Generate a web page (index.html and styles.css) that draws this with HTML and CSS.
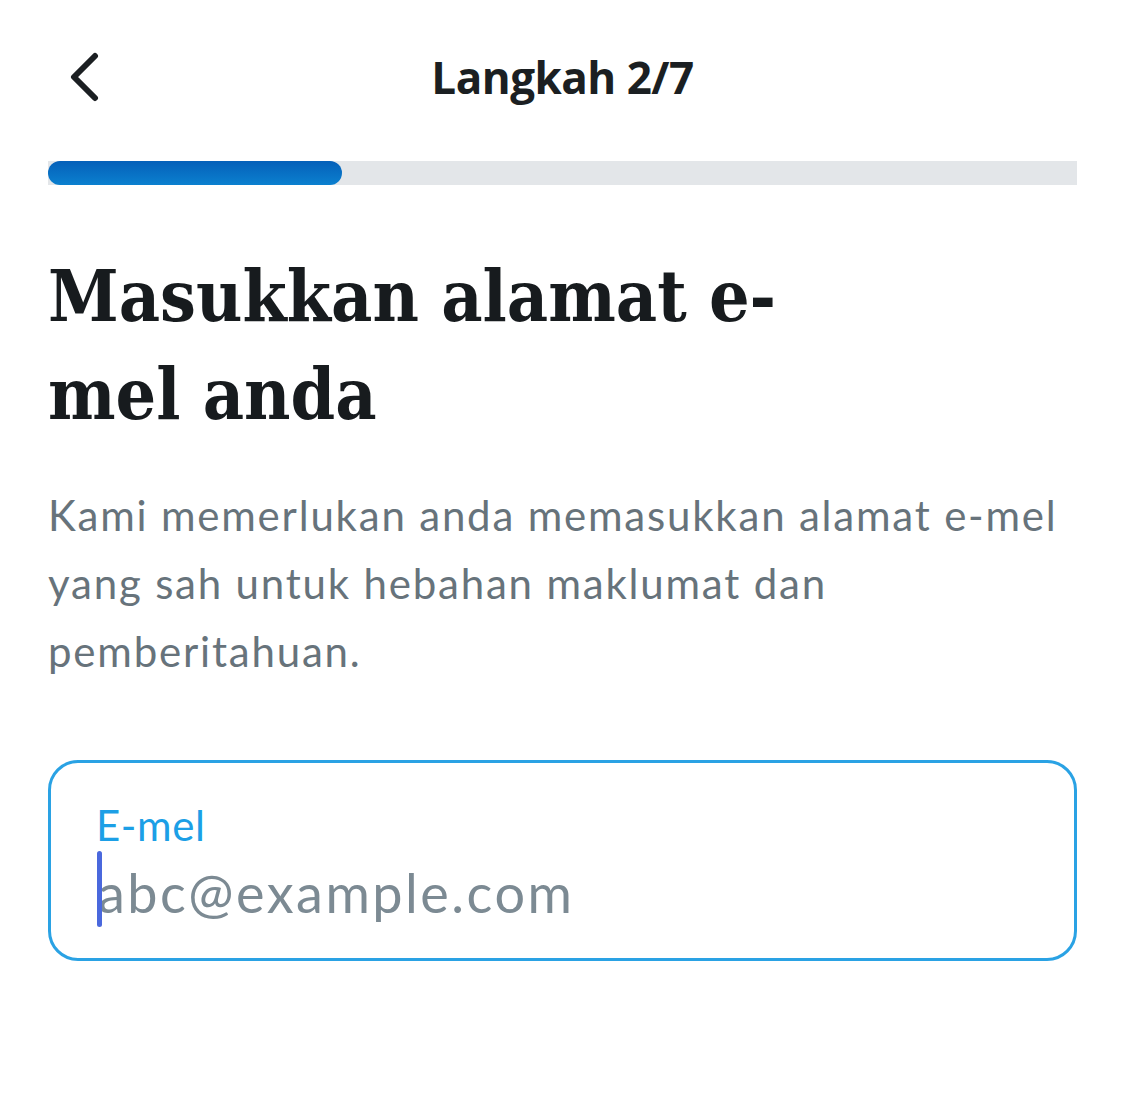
FILE: index.html
```html
<!DOCTYPE html>
<html lang="ms">
<head>
    <meta charset="UTF-8">
    <meta name="viewport" content="width=device-width, initial-scale=1.0">
    <title>Langkah 2/7</title>
    <link rel="stylesheet" href="styles.css">
</head>
<body>
    <div class="page">
        <div class="topbar">
            <a href="#" class="back" aria-label="Kembali">
                <svg width="36" height="52" viewBox="0 0 36 52">
                    <path d="M29 4 L8 25 L29 46" fill="none" stroke="#1b1f22" stroke-width="6" stroke-linecap="round" stroke-linejoin="round"/>
                </svg>
            </a>
            <h1 class="step-title">Langkah 2/7</h1>
        </div>

        <div class="progress">
            <div class="progress-fill" style="width: 28.6%"></div>
        </div>

        <h2 class="heading">Masukkan alamat e-<br>mel anda</h2>

        <p class="desc">Kami memerlukan anda memasukkan alamat e-mel yang sah untuk hebahan maklumat dan pemberitahuan.</p>

        <div class="field">
            <label for="email" class="field-label">E-mel</label>
            <div class="field-row">
                <span class="caret"></span>
                <input type="email" id="email" class="field-input" placeholder="abc@example.com">
            </div>
        </div>
    </div>
</body>
</html>
```

FILE: styles.css
```css
body {
    margin: 0;
    padding: 0;
    background-color: #ffffff;
    font-family: Lato, "Noto Sans", sans-serif;
}

.page {
    padding: 0 48px;
}

.topbar {
    position: relative;
    height: 160px;
    display: flex;
    align-items: center;
    justify-content: center;
}

.topbar .back {
    position: absolute;
    left: 18px;
    top: 52px;
    display: block;
}

.step-title {
    margin: 0;
    font-family: "Open Sans", sans-serif;
    font-size: 44px;
    font-weight: 700;
    letter-spacing: -0.5px;
    color: #1b1f22;
    position: relative;
    top: -3px;
}

.progress {
    height: 24px;
    background-color: #e3e6e9;
    margin-top: 1px;
}

.progress-fill {
    height: 100%;
    border-radius: 12px;
    background: linear-gradient(180deg, #0560b9 0%, #0b80cf 100%);
}

.heading {
    margin: 62px 0 0 0;
    font-family: "DejaVu Serif", serif;
    font-stretch: condensed;
    font-size: 71px;
    font-weight: 700;
    line-height: 98px;
    color: #171b1e;
}

.desc {
    margin: 38px 0 0 0;
    font-size: 42px;
    line-height: 68px;
    letter-spacing: 1.8px;
    color: #67737b;
}

.field {
    margin-top: 75px;
    height: 201px;
    border: 3px solid #2aa2e4;
    border-radius: 30px;
    padding: 37px 48px 0 45px;
    box-sizing: border-box;
}

.field-label {
    display: block;
    font-size: 42px;
    line-height: 50px;
    letter-spacing: 0.6px;
    color: #1c9fe6;
}

.field-row {
    position: relative;
    display: flex;
    align-items: center;
    height: 84px;
}

.caret {
    position: absolute;
    left: 1px;
    top: 1px;
    width: 5px;
    height: 76px;
    border-radius: 3px;
    background-color: #4a68dd;
}

.field-input {
    border: none;
    outline: none;
    padding: 0 0 0 2px;
    width: 100%;
    font-family: Lato, "Noto Sans", sans-serif;
    font-size: 54px;
    letter-spacing: 2.5px;
    color: #1b1f22;
    background: transparent;
}

.field-input::placeholder {
    color: #7c8a93;
}
```
